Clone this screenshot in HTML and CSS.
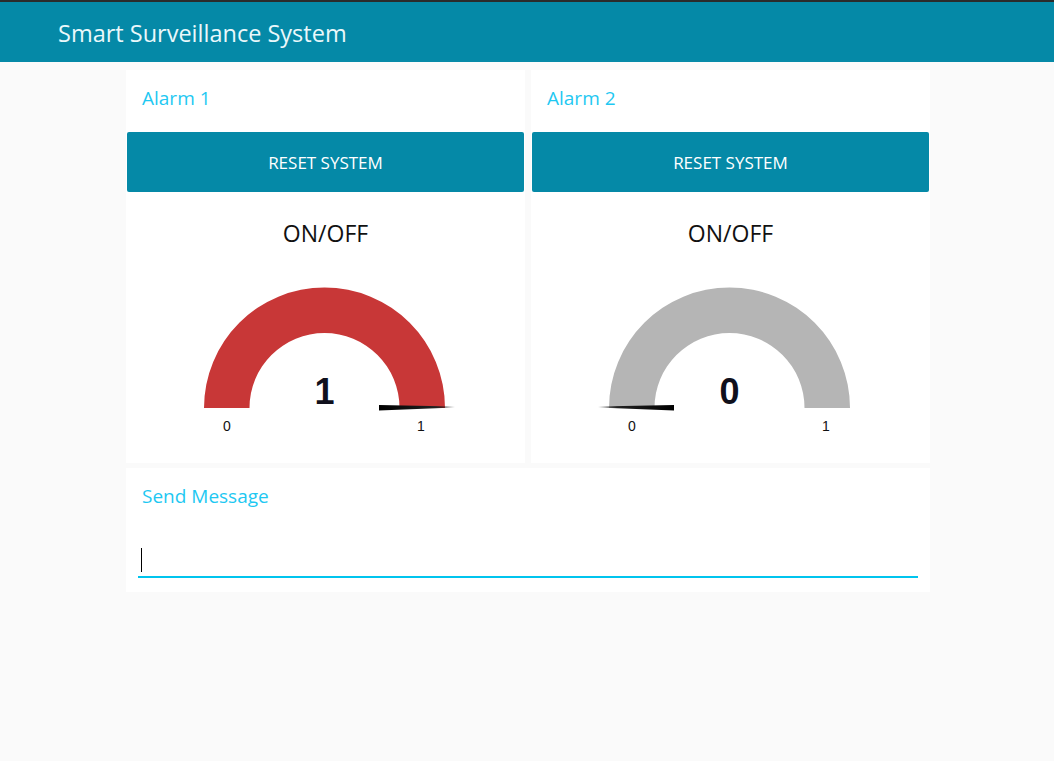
FILE: index.html
```html
<!DOCTYPE html>
<html>
<head>
<meta charset="utf-8">
<title>Smart Surveillance System</title>
<link rel="stylesheet" href="styles.css">
</head>
<body>
<header class="topbar">
  <h1 class="app-title">Smart Surveillance System</h1>
</header>
<main class="layout">
  <section class="card">
    <h2 class="card-title">Alarm 1</h2>
    <button class="btn">RESET SYSTEM</button>
    <div class="gauge-label">ON/OFF</div>
    <svg class="gauge" width="399" height="180" viewBox="0 0 399 180">
      <defs>
        <linearGradient id="needleR" x1="0" y1="0" x2="1" y2="0">
          <stop offset="0" stop-color="#000"/>
          <stop offset="0.75" stop-color="#222"/>
          <stop offset="1" stop-color="#000" stop-opacity="0"/>
        </linearGradient>
      </defs>
      <path d="M 78 148 A 120.5 120.5 0 0 1 319 148 L 273.5 148 A 75 75 0 0 0 123.5 148 Z" fill="#c83737"/>
      <text x="198.5" y="144" class="gauge-value">1</text>
      <polygon points="253,145 253,150.5 329,147.5 329,146.5" fill="url(#needleR)"/>
      <text x="101" y="171" class="gauge-tick">0</text>
      <text x="295" y="171" class="gauge-tick">1</text>
    </svg>
  </section>
  <section class="card">
    <h2 class="card-title">Alarm 2</h2>
    <button class="btn">RESET SYSTEM</button>
    <div class="gauge-label">ON/OFF</div>
    <svg class="gauge" width="399" height="180" viewBox="0 0 399 180">
      <defs>
        <linearGradient id="needleL" x1="1" y1="0" x2="0" y2="0">
          <stop offset="0" stop-color="#000"/>
          <stop offset="0.75" stop-color="#222"/>
          <stop offset="1" stop-color="#000" stop-opacity="0"/>
        </linearGradient>
      </defs>
      <path d="M 78 148 A 120.5 120.5 0 0 1 319 148 L 273.5 148 A 75 75 0 0 0 123.5 148 Z" fill="#b5b5b5"/>
      <text x="198.5" y="144" class="gauge-value">0</text>
      <polygon points="143,145 143,150.5 67,147.5 67,146.5" fill="url(#needleL)"/>
      <text x="101" y="171" class="gauge-tick">0</text>
      <text x="295" y="171" class="gauge-tick">1</text>
    </svg>
  </section>
  <section class="card card-wide">
    <h2 class="card-title">Send Message</h2>
    <div class="field">
      <span class="caret"></span>
    </div>
  </section>
</main>
</body>
</html>
```

FILE: styles.css
```css
* { box-sizing: border-box; }

html, body {
  margin: 0;
  padding: 0;
  background: #fafafa;
  font-family: "Open Sans", "Noto Sans", sans-serif;
}

.topbar {
  height: 62px;
  background: #0589a7;
  border-top: 2px solid #2b2b2b;
  display: flex;
  align-items: center;
  padding-left: 58px;
}

.app-title {
  margin: 0;
  font-weight: 400;
  font-size: 23.5px;
  line-height: 30px;
  padding-top: 1px;
  color: #eaf8fb;
  letter-spacing: 0;
}

.layout {
  width: 804px;
  margin-left: 126px;
  padding-top: 8px;
  display: grid;
  grid-template-columns: 399px 399px;
  column-gap: 6px;
  row-gap: 5px;
}

.card {
  background: #ffffff;
  display: flex;
  flex-direction: column;
  align-items: stretch;
  height: 393px;
}

.card-wide {
  grid-column: 1 / 3;
  height: 124px;
}

.card-title {
  margin: 0;
  height: 62px;
  padding: 16px 0 0 16px;
  font-size: 19px;
  line-height: 24px;
  font-weight: 400;
  color: #1ec8f2;
}

.btn {
  margin: 0 1px;
  height: 60px;
  border: none;
  border-radius: 2px;
  background: #0589a7;
  color: #ffffff;
  font-family: "Open Sans", "Noto Sans", sans-serif;
  font-size: 17px;
  padding: 0;
}

.gauge-label {
  height: 68px;
  padding-top: 26px;
  line-height: 30px;
  text-align: center;
  font-size: 23px;
  color: #111111;
}

.gauge {
  display: block;
}

.gauge-value {
  font-family: "Liberation Sans", Arial, sans-serif;
  font-weight: 700;
  font-size: 36px;
  fill: #10101c;
  text-anchor: middle;
}

.gauge-tick {
  font-family: "Liberation Sans", Arial, sans-serif;
  font-size: 14px;
  fill: #111111;
  text-anchor: middle;
}

.field {
  margin: 0 12px;
  height: 48px;
  border-bottom: 2px solid #00c4ee;
  display: flex;
  align-items: flex-end;
  padding: 0 0 4px 3px;
}

.caret {
  display: block;
  width: 1px;
  height: 24px;
  background: #000000;
}
```
